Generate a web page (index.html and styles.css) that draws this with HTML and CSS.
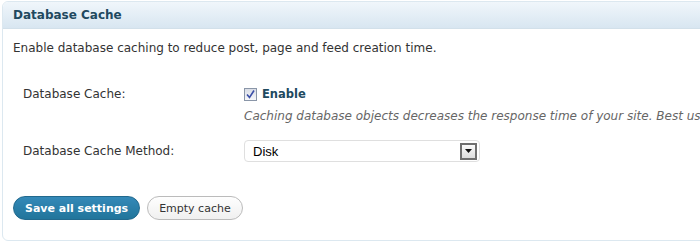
FILE: index.html
```html
<!DOCTYPE html>
<html lang="en">
<head>
    <meta charset="UTF-8">
    <title>Database Cache</title>
    <link rel="stylesheet" href="styles.css">
</head>
<body>
    <div class="postbox">
        <h3 class="hndle">Database Cache</h3>
        <div class="inside">
            <p class="intro">Enable database caching to reduce post, page and feed creation time.</p>

            <div class="form-table">
                <div class="row">
                    <div class="label">Database Cache:</div>
                    <div class="field">
                        <label class="check">
                            <span class="checkbox">
                                <svg width="9" height="9" viewBox="0 0 9 9"><path d="M1 4.5 L3.5 7.5 L8 0.5" fill="none" stroke="#3b4fa8" stroke-width="1.6"/></svg>
                            </span>
                            <strong>Enable</strong>
                        </label>
                        <div class="description">Caching database objects decreases the response time of your site. Best used if object caching is not possible.</div>
                    </div>
                </div>

                <div class="row">
                    <div class="label">Database Cache Method:</div>
                    <div class="field">
                        <div class="select">
                            <span>Disk</span>
                            <span class="arrow">
                                <svg width="7" height="4" viewBox="0 0 7 4"><path d="M0 0 H7 L3.5 4 Z" fill="#111"/></svg>
                            </span>
                        </div>
                    </div>
                </div>
            </div>

            <div class="actions">
                <button class="button-primary">Save all settings</button>
                <button class="button">Empty cache</button>
            </div>
        </div>
    </div>
</body>
</html>
```

FILE: styles.css
```css
/* ===== Base ===== */
body {
    margin: 0;
    padding: 1px 0 0 2px;
    background: #fff;
    font-family: "DejaVu Sans", Verdana, sans-serif;
    font-size: 12px;
    color: #333;
    overflow: hidden;
}

/* ===== Box ===== */
.postbox {
    width: 720px;
    height: 240px;
    border: 1px solid #dce8f0;
    border-radius: 6px;
    box-sizing: border-box;
    overflow: hidden;
}

.hndle {
    margin: 0;
    height: 27px;
    padding: 0 10px;
    line-height: 26px;
    font-size: 12px;
    font-weight: bold;
    color: #21495f;
    background: linear-gradient(#f0f6fb, #d8e6f1);
    border-bottom: 1px solid #d2e0ea;
    border-radius: 5px 5px 0 0;
    box-sizing: border-box;
}

.inside {
    padding: 0 10px;
}

.intro {
    margin: 12px 0 0;
}

/* ===== Form rows ===== */
.form-table {
    margin-top: 28px;
}

.row {
    display: flex;
    margin-bottom: 17px;
}

.row:last-child {
    margin-bottom: 0;
}

.label {
    flex-shrink: 0;
    width: 221px;
    padding-left: 10px;
    line-height: 22px;
}

.field {
    flex: 1;
    white-space: nowrap;
}

.check {
    display: flex;
    align-items: center;
    gap: 5px;
    height: 22px;
}

.checkbox {
    width: 11px;
    height: 11px;
    border: 1px solid #8a96a8;
    background: linear-gradient(#d9dde6, #f6f7fa);
    display: flex;
    align-items: center;
    justify-content: center;
}

.check strong {
    color: #21495f;
    font-size: 11.5px;
}

.description {
    margin-top: 4px;
    font-style: italic;
    color: #666;
}

.select {
    width: 236px;
    height: 22px;
    border: 1px solid #dfdfdf;
    border-radius: 4px;
    box-sizing: border-box;
    display: flex;
    align-items: center;
    justify-content: space-between;
    padding: 0 2px 0 8px;
    font-family: "Liberation Sans", Arial, sans-serif;
    font-size: 13px;
    color: #000;
}

.arrow {
    width: 13px;
    height: 13px;
    border: 2px solid #6e6e6e;
    background: linear-gradient(#fafafa, #dcdcdc);
    display: flex;
    align-items: center;
    justify-content: center;
    box-sizing: content-box;
}

/* ===== Buttons ===== */
.actions {
    display: flex;
    gap: 7px;
    margin-top: 34px;
}

.button-primary,
.button {
    height: 24px;
    border-radius: 12px;
    font-family: "DejaVu Sans", Verdana, sans-serif;
    font-size: 11px;
    padding: 0 11px;
}

.button-primary {
    background: linear-gradient(#3489b8, #21759b);
    border: 1px solid #22698d;
    color: #fff;
    font-weight: bold;
}

.button {
    background: linear-gradient(#fefefe, #f0f0f0);
    border: 1px solid #bbb;
    color: #333;
}
```
